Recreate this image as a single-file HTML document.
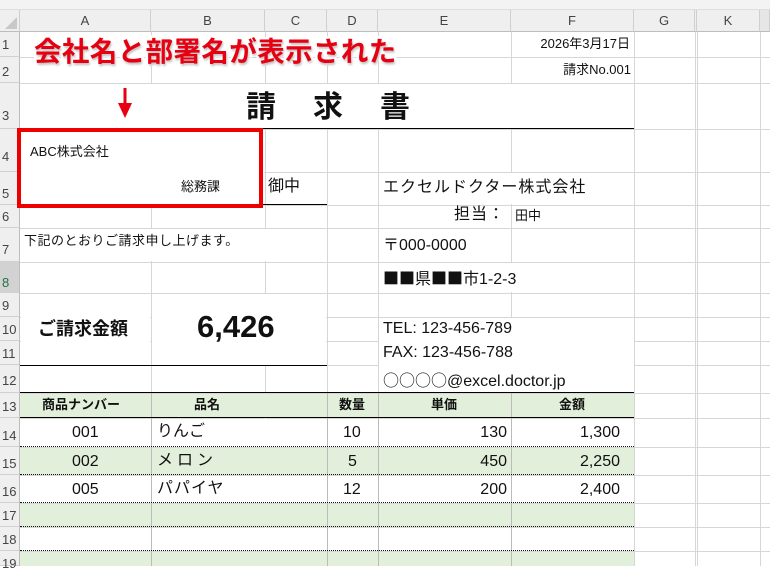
<!DOCTYPE html>
<html><head><meta charset="utf-8"><style>
*{margin:0;padding:0;box-sizing:border-box}
body{width:770px;height:566px;overflow:hidden;background:#fff;position:relative;font-family:"Liberation Sans","Noto Sans CJK JP",sans-serif;color:#111}
div{position:absolute}
.v{width:1px;background:#d6d6d6;top:10px;height:556px}
.h{height:1px;background:#d6d6d6;left:0;width:770px}
.w{background:#fff}
.t{white-space:nowrap;line-height:1}
.ch{top:10px;height:22px;background:#efefef;font-size:13px;color:#444;text-align:center;line-height:22px;border-right:1px solid #cfcfcf;border-bottom:1px solid #bdbdbd}
.rh{left:0;width:20px;background:#efefef;font-size:13px;color:#444;text-align:left;padding-left:2px;border-bottom:1px solid #d0d0d0;border-right:1px solid #bdbdbd}
.g{background:#e2efda;left:20px;width:614px}
.dot{left:20px;width:614px;height:0;border-top:1px dotted #111}
.s13{font-size:13px}.s16{font-size:16px}
.cj{font-family:"Noto Sans CJK JP",sans-serif}
</style></head><body>
<div style="left:0;top:0;width:770px;height:10px;background:#f3f3f3;border-bottom:1px solid #ddd"></div>
<div class="g" style="top:393px;height:25px"></div>
<div class="g" style="top:447px;height:28px"></div>
<div class="g" style="top:503px;height:24px"></div>
<div class="g" style="top:551px;height:15px"></div>
<div class="v" style="left:151px"></div><div class="v" style="left:265px"></div><div class="v" style="left:327px"></div><div class="v" style="left:378px"></div><div class="v" style="left:511px"></div><div class="v" style="left:634px"></div><div class="v" style="left:695px"></div><div class="v" style="left:697px"></div><div class="v" style="left:760px"></div>
<div class="h" style="top:57px"></div><div class="h" style="top:83px"></div><div class="h" style="top:129px"></div><div class="h" style="top:172px"></div><div class="h" style="top:205px"></div><div class="h" style="top:228px"></div><div class="h" style="top:262px"></div><div class="h" style="top:293px"></div><div class="h" style="top:317px"></div><div class="h" style="top:341px"></div><div class="h" style="top:365px"></div><div class="h" style="top:393px"></div><div class="h" style="top:418px"></div><div class="h" style="top:447px"></div><div class="h" style="top:475px"></div><div class="h" style="top:503px"></div><div class="h" style="top:527px"></div><div class="h" style="top:551px"></div>
<div class="w" style="left:21px;top:84px;width:613px;height:44px"></div>
<div class="w" style="left:21px;top:130px;width:243px;height:74px"></div>
<div class="w" style="left:379px;top:173px;width:255px;height:31px"></div>
<div class="w" style="left:379px;top:263px;width:255px;height:29px"></div>
<div class="w" style="left:379px;top:318px;width:255px;height:74px"></div>
<div class="w" style="left:21px;top:229px;width:305px;height:32px"></div>
<div class="w" style="left:21px;top:294px;width:129px;height:71px"></div>
<div class="w" style="left:152px;top:294px;width:174px;height:71px"></div>
<div style="left:265px;top:393px;width:1px;height:173px;background:#fff"></div>
<div style="left:265px;top:393px;width:1px;height:25px;background:#e2efda"></div>
<div style="left:265px;top:447px;width:1px;height:28px;background:#e2efda"></div>
<div style="left:265px;top:503px;width:1px;height:24px;background:#e2efda"></div>
<div style="left:265px;top:551px;width:1px;height:15px;background:#e2efda"></div>
<div style="left:151px;top:393px;width:1px;height:173px;background:#bbb"></div>
<div style="left:327px;top:393px;width:1px;height:173px;background:#bbb"></div>
<div style="left:378px;top:393px;width:1px;height:173px;background:#bbb"></div>
<div style="left:511px;top:393px;width:1px;height:173px;background:#bbb"></div>
<div style="left:20px;top:128px;width:614px;height:1px;background:#000"></div>
<div style="left:262px;top:204px;width:65px;height:1px;background:#000"></div>
<div style="left:20px;top:365px;width:307px;height:1px;background:#000"></div>
<div style="left:20px;top:392px;width:614px;height:1px;background:#000"></div>
<div style="left:20px;top:417px;width:614px;height:1px;background:#000"></div>
<div class="dot" style="top:446px"></div><div class="dot" style="top:474px"></div><div class="dot" style="top:502px"></div><div class="dot" style="top:526px"></div><div class="dot" style="top:550px"></div>
<div class="ch" style="left:0;width:20px;background:#efefef"></div>
<svg style="position:absolute;left:4px;top:16px" width="14" height="14"><polygon points="13,1 13,13 1,13" fill="#c8c8c8"/></svg>
<div class="ch" style="left:20px;width:131px">A</div>
<div class="ch" style="left:151px;width:114px">B</div>
<div class="ch" style="left:265px;width:62px">C</div>
<div class="ch" style="left:327px;width:51px">D</div>
<div class="ch" style="left:378px;width:133px">E</div>
<div class="ch" style="left:511px;width:123px">F</div>
<div class="ch" style="left:634px;width:61px">G</div>
<div class="ch" style="left:695px;width:2px;padding:0"></div>
<div class="ch" style="left:697px;width:63px">K</div>
<div class="ch" style="left:760px;width:10px;background:#e6e6e6"></div>
<div class="rh" style="top:32px;height:25px;line-height:25px">1</div>
<div class="rh" style="top:57px;height:26px;line-height:30px">2</div>
<div class="rh" style="top:83px;height:46px;line-height:66px">3</div>
<div class="rh" style="top:129px;height:43px;line-height:56px">4</div>
<div class="rh" style="top:172px;height:33px;line-height:44px">5</div>
<div class="rh" style="top:205px;height:23px;line-height:23px">6</div>
<div class="rh" style="top:228px;height:34px;line-height:44px">7</div>
<div class="rh" style="top:262px;height:31px;line-height:42px;background:#d2d2d2;color:#217346">8</div>
<div class="rh" style="top:293px;height:24px;line-height:26px">9</div>
<div class="rh" style="top:317px;height:24px;line-height:26px">10</div>
<div class="rh" style="top:341px;height:24px;line-height:26px">11</div>
<div class="rh" style="top:365px;height:28px;line-height:32px">12</div>
<div class="rh" style="top:393px;height:25px;line-height:27px">13</div>
<div class="rh" style="top:418px;height:29px;line-height:35px">14</div>
<div class="rh" style="top:447px;height:28px;line-height:34px">15</div>
<div class="rh" style="top:475px;height:28px;line-height:34px">16</div>
<div class="rh" style="top:503px;height:24px;line-height:26px">17</div>
<div class="rh" style="top:527px;height:24px;line-height:26px">18</div>
<div class="rh" style="top:551px;height:15px;line-height:26px">19</div>
<div class="t s13" style="right:140px;top:37px">2026年3月17日</div>
<div class="t s13" style="right:139px;top:63px">請求No.001</div>
<div class="t" style="left:246px;top:93px;font-size:30px;font-weight:bold;letter-spacing:37px">請求書</div>
<div class="t s13" style="left:30px;top:145px">ABC株式会社</div>
<div class="t s13" style="left:181px;top:180px">総務課</div>
<div class="t s16" style="left:268px;top:179px">御中</div>
<div class="t s16" style="left:383px;top:180px;letter-spacing:1px">エクセルドクター株式会社</div>
<div class="t s16" style="left:454px;top:207px;letter-spacing:1px">担当：</div>
<div class="t s13" style="left:515px;top:209px">田中</div>
<div class="t s13" style="left:24px;top:234px;letter-spacing:.5px">下記のとおりご請求申し上げます。</div>
<div class="t s16" style="left:383px;top:238px">〒000-0000</div>
<div class="t s16" style="left:383px;top:269px"><span class="cj">■■県■■市</span>1-2-3</div>
<div class="t" style="left:38px;top:320px;font-size:18px;font-weight:bold">ご請求金額</div>
<div class="t" style="left:197px;top:311px;font-size:31px;font-weight:bold">6,426</div>
<div class="t s16" style="left:383px;top:321px">TEL: 123-456-789</div>
<div class="t s16" style="left:383px;top:345px">FAX: 123-456-788</div>
<div class="t s16" style="left:383px;top:371px"><span class="cj">○○○○</span>@excel.doctor.jp</div>
<div class="t s13" style="left:42px;top:398px;font-weight:bold">商品ナンバー</div>
<div class="t s13" style="left:194px;top:398px;font-weight:bold">品名</div>
<div class="t s13" style="left:339px;top:398px;font-weight:bold">数量</div>
<div class="t s13" style="left:431px;top:398px;font-weight:bold">単価</div>
<div class="t s13" style="left:559px;top:398px;font-weight:bold">金額</div>
<div class="t s16" style="left:72px;top:425px">001</div>
<div class="t s16" style="left:157px;top:424px">りんご</div>
<div class="t s16" style="left:343px;top:425px">10</div>
<div class="t s16" style="right:263px;top:425px">130</div>
<div class="t s16" style="right:150px;top:425px">1,300</div>
<div class="t s16" style="left:72px;top:454px">002</div>
<div class="t s16" style="left:157px;top:453px;letter-spacing:4px">メロン</div>
<div class="t s16" style="left:348px;top:454px">5</div>
<div class="t s16" style="right:263px;top:454px">450</div>
<div class="t s16" style="right:150px;top:454px">2,250</div>
<div class="t s16" style="left:72px;top:482px">005</div>
<div class="t s16" style="left:157px;top:481px;letter-spacing:1px">パパイヤ</div>
<div class="t s16" style="left:343px;top:482px">12</div>
<div class="t s16" style="right:263px;top:482px">200</div>
<div class="t s16" style="right:150px;top:482px">2,400</div>
<div class="t" style="left:34px;top:38px;font-size:27.5px;font-weight:bold;letter-spacing:.4px;color:#e60012;-webkit-text-stroke:5px #fff;paint-order:stroke fill;text-shadow:1px 2px 2px rgba(0,0,0,.25)">会社名と部署名が表示された</div>
<svg style="position:absolute;left:116px;top:86px" width="18" height="34"><rect x="7.5" y="2" width="3" height="20" fill="#e60012"/><polygon points="2,17 16,17 9,32" fill="#e60012"/></svg>
<div style="left:17px;top:128px;width:246px;height:80px;border:4px solid #e00;"></div>
</body></html>
